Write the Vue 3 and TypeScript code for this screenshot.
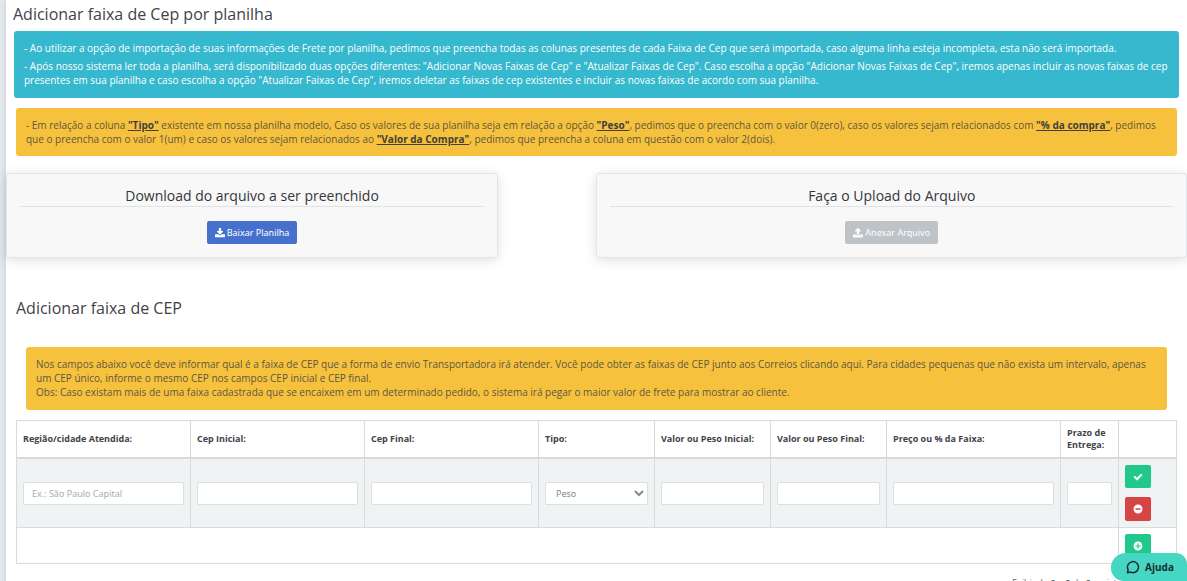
<script setup lang="ts">
import { ref } from 'vue'

interface Column {
  id: string
  label: string
  size: 'wide' | 'medium' | 'narrow'
  kind: 'text' | 'select'
  placeholder?: string
}

const columns: Column[] = [
  { id: 'regiao', label: 'Região/cidade Atendida:', size: 'wide', kind: 'text', placeholder: 'Ex.: São Paulo Capital' },
  { id: 'cep-inicial', label: 'Cep Inicial:', size: 'wide', kind: 'text' },
  { id: 'cep-final', label: 'Cep Final:', size: 'wide', kind: 'text' },
  { id: 'tipo', label: 'Tipo:', size: 'medium', kind: 'select' },
  { id: 'valor-inicial', label: 'Valor ou Peso Inicial:', size: 'medium', kind: 'text' },
  { id: 'valor-final', label: 'Valor ou Peso Final:', size: 'medium', kind: 'text' },
  { id: 'preco', label: 'Preço ou % da Faixa:', size: 'wide', kind: 'text' },
  { id: 'prazo', label: 'Prazo de Entrega:', size: 'narrow', kind: 'text' },
]

const tipos = ['Peso', '% da compra', 'Valor da Compra']
const tipo = ref('Peso')
</script>

<template>
  <div class="page">
    <main class="panel">
      <section class="import">
        <h1 class="title">Adicionar faixa de Cep por planilha</h1>
        <div class="alert info">
          <p>- Ao utilizar a opção de importação de suas informações de Frete por planilha, pedimos que preencha todas as colunas presentes de cada Faixa de Cep que será importada, caso alguma linha esteja incompleta, esta não será importada.</p>
          <p>- Após nosso sistema ler toda a planilha, será disponibilizado duas opções diferentes: "Adicionar Novas Faixas de Cep" e "Atualizar Faixas de Cep". Caso escolha a opção "Adicionar Novas Faixas de Cep", iremos apenas incluir as novas faixas de cep presentes em sua planilha e caso escolha a opção "Atualizar Faixas de Cep", iremos deletar as faixas de cep existentes e incluir as novas faixas de acordo com sua planilha.</p>
        </div>
        <div class="alert warning types">
          - Em relação a coluna <b>"Tipo"</b> existente em nossa planilha modelo, Caso os valores de sua planilha seja em relação a opção <b>"Peso"</b>, pedimos que o preencha com o valor 0(zero), caso os valores sejam relacionados com <b>"% da compra"</b>, pedimos que o preencha com o valor 1(um) e caso os valores sejam relacionados ao <b>"Valor da Compra"</b>, pedimos que preencha a coluna em questão com o valor 2(dois).
        </div>
      </section>

      <div class="cards">
        <section class="card">
          <h2>Download do arquivo a ser preenchido</h2>
          <button type="button" class="btn primary">
            <svg class="icon" viewBox="0 0 1664 1664" aria-hidden="true"><path d="M1280 1344q0 26-19 45t-45 19-45-19-19-45 19-45 45-19 45 19 19 45zm256 0q0 26-19 45t-45 19-45-19-19-45 19-45 45-19 45 19 19 45zm128-224v320q0 40-28 68t-68 28h-1472q-40 0-68-28t-28-68v-320q0-40 28-68t68-28h465l135 136q58 56 136 56t136-56l136-136h464q40 0 68 28t28 68zm-325-569q17 41-14 70l-448 448q-18 19-45 19t-45-19l-448-448q-31-29-14-70 17-39 59-39h256v-448q0-26 19-45t45-19h256q26 0 45 19t19 45v448h256q42 0 59 39z" /></svg>
            Baixar Planilha
          </button>
        </section>
        <section class="card upload">
          <h2>Faça o Upload do Arquivo</h2>
          <button type="button" class="btn muted">
            <svg class="icon" viewBox="0 0 1664 1664" aria-hidden="true"><path d="M1280 1408q0-26-19-45t-45-19-45 19-19 45 19 45 45 19 45-19 19-45zm256 0q0-26-19-45t-45-19-45 19-19 45 19 45 45 19 45-19 19-45zm128-224v320q0 40-28 68t-68 28h-1472q-40 0-68-28t-28-68v-320q0-40 28-68t68-28h427q21 56 70.5 92t110.5 36h256q61 0 110.5-36t70.5-92h427q40 0 68 28t28 68zm-325-648q-17 40-59 40h-256v448q0 26-19 45t-45 19h-256q-26 0-45-19t-19-45v-448h-256q-42 0-59-40-17-39 14-69l448-448q18-19 45-19t45 19l448 448q31 30 14 69z" /></svg>
            Anexar Arquivo
          </button>
        </section>
      </div>

      <section class="ranges">
        <h1 class="title">Adicionar faixa de CEP</h1>
        <div class="alert warning help-text">
          Nos campos abaixo você deve informar qual é a faixa de CEP que a forma de envio Transportadora irá atender. Você pode obter as faixas de CEP junto aos Correios clicando aqui. Para cidades pequenas que não exista um intervalo, apenas um CEP único, informe o mesmo CEP nos campos CEP inicial e CEP final.<br>
          Obs: Caso existam mais de uma faixa cadastrada que se encaixem em um determinado pedido, o sistema irá pegar o maior valor de frete para mostrar ao cliente.
        </div>
        <table>
          <colgroup>
            <col v-for="c in columns" :key="c.id" :class="c.size">
            <col class="narrow">
          </colgroup>
          <thead>
            <tr>
              <th v-for="c in columns" :id="c.id" :key="c.id" scope="col">{{ c.label }}</th>
              <th scope="col"></th>
            </tr>
          </thead>
          <tbody>
            <tr class="entry">
              <td v-for="c in columns" :key="c.id">
                <select v-if="c.kind === 'select'" v-model="tipo" class="field" :aria-labelledby="c.id">
                  <option v-for="t in tipos" :key="t">{{ t }}</option>
                </select>
                <input v-else type="text" class="field" :placeholder="c.placeholder" :aria-labelledby="c.id">
              </td>
              <td>
                <div class="actions">
                  <button type="button" class="btn success" aria-label="Salvar">
                    <svg class="icon" viewBox="0 0 1792 1792" aria-hidden="true"><path d="M1671 566q0 40-28 68l-724 724-136 136q-28 28-68 28t-68-28l-136-136-362-362q-28-28-28-68t28-68l136-136q28-28 68-28t68 28l294 295 656-657q28-28 68-28t68 28l136 136q28 28 28 68z" /></svg>
                  </button>
                  <button type="button" class="btn danger" aria-label="Remover">
                    <svg class="icon" viewBox="0 0 18 18" aria-hidden="true"><path fill-rule="evenodd" d="M9 1a8 8 0 1 1 0 16A8 8 0 0 1 9 1zM5 7.700a.6.6 0 0 0-.6.6v1.400a.6.6 0 0 0 .6.6h8a.6.6 0 0 0 .6-.6V8.300a.6.6 0 0 0-.6-.6z" /></svg>
                  </button>
                </div>
              </td>
            </tr>
            <tr>
              <td colspan="8"></td>
              <td>
                <div class="actions">
                  <button type="button" class="btn success" aria-label="Adicionar">
                    <svg class="icon" viewBox="0 0 18 18" aria-hidden="true"><path fill-rule="evenodd" d="M9 1a8 8 0 1 1 0 16A8 8 0 0 1 9 1zM7.900 4.400v3.500H4.400v2.200h3.500v3.500h2.200v-3.500h3.500V7.900h-3.500V4.400z" /></svg>
                  </button>
                </div>
              </td>
            </tr>
          </tbody>
        </table>
        <p class="summary">Exibindo <b>0</b> a <b>0</b> de <b>0</b> registros</p>
      </section>
    </main>

    <button type="button" class="help">
      <svg viewBox="0 0 14 14" aria-hidden="true"><path d="M1.500 12.700 2.100 9.700A5.500 5.500 0 1 1 4.600 12.100z" /></svg>
      Ajuda
    </button>
  </div>
</template>

<style>
html {
  overflow: hidden;
}

body {
  background: #e4e9ed;
}
</style>

<style scoped>
.page {
  padding-left: 6px;
  color: #3e4b5b;
  font-family: "Open Sans", "Noto Sans", sans-serif;
  font-size: 10px;
  line-height: 14px;
}

.panel {
  background: #fff;
  box-shadow: 0 0 6px rgba(0, 0, 0, 0.12);
  min-height: 100vh;
}

.import {
  padding: 2px 8px 0;
}

.title {
  margin: 0;
  color: #3f4348;
  font-size: 16px;
  font-weight: 400;
  line-height: 24px;
}

.import .title {
  margin-left: -1px;
}

.alert {
  padding: 10px;
  border-radius: 3px;
}

.info {
  margin-top: 5px;
  padding-bottom: 11px;
  background: #36b8ce;
  color: #fff;
}

.info p {
  margin: 0;
}

.info p + p {
  margin-top: 4px;
}

.warning {
  background: #f6c23e;
  color: #5f5640;
}

.warning b {
  color: #40403c;
  font-weight: 700;
  text-decoration: underline;
}

.types {
  margin: 10px 2px 0;
}

.cards {
  display: grid;
  grid-template-columns: 5fr 1fr 6fr;
  margin-top: 17px;
}

.card {
  padding: 12px 13px 13px;
  border: 1px solid #e3e4e5;
  border-radius: 3px;
  background: #f8f8f8;
  box-shadow: 0 2px 12px rgba(0, 0, 0, 0.13);
  text-align: center;
}

.upload {
  grid-column: 3;
}

.card h2 {
  margin: 0 0 14px;
  border-bottom: 1px solid #e1e2e3;
  color: #33363b;
  font-size: 14px;
  font-weight: 400;
  line-height: 20px;
}

.btn {
  display: inline-flex;
  align-items: center;
  gap: 2px;
  height: 23px;
  padding: 0 8px;
  border: 0;
  border-radius: 2px;
  color: #fff;
  font-family: "Noto Sans", "Open Sans", sans-serif;
  font-size: 9px;
  line-height: 14px;
  vertical-align: top;
}

.icon {
  width: 10px;
  height: 10px;
  fill: currentColor;
}

.primary {
  background: #4670cd;
}

.muted {
  background: #bdc3c7;
}

.success {
  background: #20c98b;
}

.danger {
  height: 24px;
  background: #d64444;
}

.ranges {
  padding: 38px 10px 0;
}

.help-text {
  margin: 27px 10px 10px;
  padding-bottom: 11px;
}

table {
  width: 100%;
  border-collapse: collapse;
  table-layout: fixed;
}

th,
td {
  padding: 6px;
  border: 1px solid #d9dadb;
}

th {
  height: 24px;
  border-bottom-width: 2px;
  color: #3f4348;
  font-size: 9px;
  font-weight: 700;
  line-height: 12px;
  text-align: left;
}

.wide {
  width: 15%;
}

.medium {
  width: 10%;
}

.narrow {
  width: 5%;
}

.entry {
  background: #eff3f4;
}

.field {
  display: block;
  box-sizing: border-box;
  width: 100%;
  height: 23px;
  padding: 0 8px;
  border: 1px solid #dddfe1;
  border-radius: 2px;
  background: #fff;
  color: #85898e;
  font-family: "Noto Sans", "Open Sans", sans-serif;
  font-size: 9px;
}

select.field {
  padding: 0 6px;
}

.field::placeholder {
  color: #a9adb1;
}

.actions {
  display: flex;
  flex-direction: column;
  align-items: flex-start;
  gap: 9px;
}

.summary {
  margin: 12px 47px 0 0;
  color: #60656a;
  font-size: 9px;
  text-align: right;
}

.help {
  position: fixed;
  right: 0;
  bottom: 0;
  display: flex;
  align-items: center;
  gap: 5px;
  height: 28px;
  padding: 0 13px 0 15px;
  border: 0;
  border-radius: 16px 12px 0 14px;
  background: #45d6c4;
  color: #1d2c30;
  font-family: inherit;
  font-size: 10px;
  font-weight: 700;
}

.help svg {
  width: 14px;
  height: 14px;
  fill: none;
  stroke: currentColor;
  stroke-width: 1.5;
  stroke-linejoin: round;
}
</style>
